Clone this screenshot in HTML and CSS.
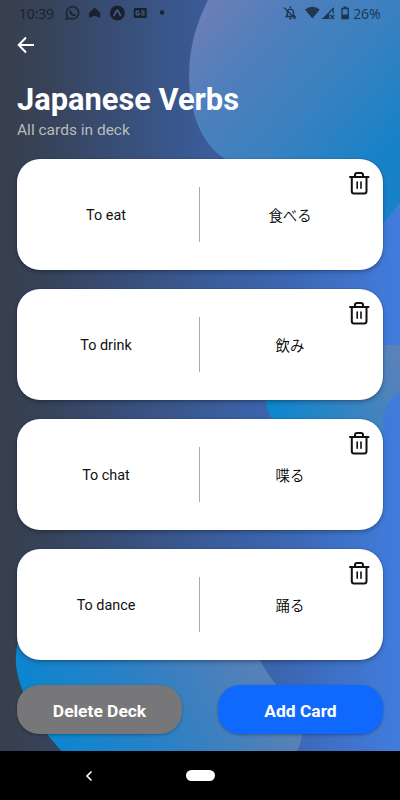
FILE: index.html
```html
<!DOCTYPE html>
<html lang="en">
<head>
<meta charset="utf-8">
<title>Japanese Verbs</title>
<link rel="stylesheet" href="styles.css">
</head>
<body>
<svg width="0" height="0" class="defs">
  <symbol id="trash" viewBox="0 0 22 24">
    <g fill="none" stroke="#111" stroke-width="2" stroke-linecap="round" stroke-linejoin="round">
      <path d="M2 6H20.500M7 5.500V4Q7 2 9 2H13Q15 2 15 4V5.500M3.800 6.500V20Q3.800 22.500 6 22.500H16.300Q18.500 22.500 18.500 20V6.500"/>
      <path stroke-width="1.6" d="M9.200 11V17.300M13 11V17.300"/>
    </g>
  </symbol>
</svg>
<div class="screen">
  <svg class="backdrop" viewBox="0 0 400 751" width="400" height="751">
    <defs>
      <linearGradient id="g1" gradientUnits="userSpaceOnUse" x1="195" y1="10" x2="370" y2="165">
        <stop offset="0" stop-color="#6f7eb6"/><stop offset=".3" stop-color="#4f7fbb"/><stop offset=".65" stop-color="#3981c0"/><stop offset="1" stop-color="#1882c7"/>
      </linearGradient>
      <linearGradient id="g2" gradientUnits="userSpaceOnUse" x1="270" y1="420" x2="400" y2="360">
        <stop offset="0" stop-color="#0b86cd"/><stop offset="1" stop-color="#5a82b9"/>
      </linearGradient>
      <linearGradient id="g3" gradientUnits="userSpaceOnUse" x1="50" y1="740" x2="235" y2="640">
        <stop offset="0" stop-color="#0a86d0"/><stop offset=".5" stop-color="#2d80c4"/><stop offset="1" stop-color="#5580b8"/>
      </linearGradient>
    </defs>
    <path fill="url(#g1)" d="M208 0C196 24 189 48 189 77C190 110 199 142 225 159C270 185 310 260 350 250Q371 239 384 222L400 203V0Z"/>
    <path fill="url(#g2)" d="M400 345H380C320 345 255 360 265 396Q270 440 320 450H383V419Q385 400 400 392Z"/>
    <path fill="url(#g3)" d="M62 751C38 727 19 692 16 665Q13 620 60 590H190C235 600 248 635 260 660Q267 674 278 687C296 704 310 727 297 751Z"/>
  </svg>
  <header class="status">
    <span class="time">10:39</span>
    <svg class="left-icons" width="112" height="16" viewBox="0 0 112 16">
      <g fill="none" stroke="#19212d" stroke-width="1.4">
        <path d="M2.200 14.200L3.200 10.900A6.200 6.200 0 1 1 5.500 13.200Z"/>
        <path stroke-width="1.900" d="M6.200 5.300Q6 8.200 8.100 9.500T11.300 10"/>
      </g>
      <path fill="#19212d" d="M25 12.800V8L29.600 3.500Q30.800 2.500 32 3.500L36.500 8V12.800L30.800 10.800Z"/>
      <circle cx="53.500" cy="8" r="7.500" fill="#19212d"/>
      <path d="M50 11L53 5.500H54L57 11" fill="none" stroke="#41598a" stroke-width="1.800"/>
      <rect x="70" y="3" width="13" height="10" rx="1" fill="#19212d"/>
      <path d="M75.500 6H72.500V10H75.500V8H74M77.500 6H81M77.500 8H81M77.500 10H81" stroke="#506a93" stroke-width="1" fill="none"/>
      <circle cx="98.500" cy="7.500" r="2.200" fill="#19212d"/>
    </svg>
    <svg class="right-icons" width="68" height="16" viewBox="0 0 68 16">
      <g fill="none" stroke="#203650" stroke-width="1.400">
        <path d="M3 11.500H12L10.500 10V6.500A3.200 3.200 0 0 0 4.300 6.500V10ZM7.400 3V1.500M6.200 13.500H8.600M1 2.500L12.500 14"/>
        <path d="M59.200 3.500H65.500V13.500H59.200ZM60.700 2.200H64"/>
      </g>
      <path fill="#203650" d="M22 4.500Q29.500-1 37 4.500L29.500 13.500ZM39 14L51 2V8.500H49.800V5L46.500 8.500V14ZM59 9.500H66V14H59Z"/>
      <path d="M47.500 10L51.300 14M51.300 10L47.500 14" stroke="#203650" stroke-width="1.200"/>
    </svg>
    <span class="battery">26%</span>
  </header>
  <main class="content">
    <svg class="back" width="18" height="18" viewBox="0 0 18 18"><path d="M17 9H2M9 1.500L1.700 9L9 16.500" fill="none" stroke="#fff" stroke-width="2"/></svg>
    <h1>Japanese Verbs</h1>
    <p class="subtitle">All cards in deck</p>
    <section class="cards">
      <article class="card"><span class="word">To eat</span><i class="rule"></i><span class="word" lang="ja">食べる</span><svg class="trash"><use href="#trash"/></svg></article>
      <article class="card"><span class="word">To drink</span><i class="rule"></i><span class="word" lang="ja">飲み</span><svg class="trash"><use href="#trash"/></svg></article>
      <article class="card"><span class="word">To chat</span><i class="rule"></i><span class="word" lang="ja">喋る</span><svg class="trash"><use href="#trash"/></svg></article>
      <article class="card"><span class="word">To dance</span><i class="rule"></i><span class="word" lang="ja">踊る</span><svg class="trash"><use href="#trash"/></svg></article>
    </section>
    <div class="actions"><button class="delete">Delete Deck</button><button class="add">Add Card</button></div>
  </main>
  <nav class="navbar">
    <svg width="8" height="12" viewBox="0 0 8 12"><path d="M6.500 1.500L2 6L6.500 10.500" fill="none" stroke="#fff" stroke-width="1.600"/></svg>
    <span class="pill"></span>
  </nav>
</div>
</body>
</html>
```
FILE: styles.css
```css
* { box-sizing: border-box; }
body { margin: 0; font-family: Roboto, "Noto Sans CJK JP", sans-serif; }
.defs { position: absolute; }
.screen {
  position: relative;
  width: 400px;
  height: 800px;
  overflow: hidden;
  display: flex;
  flex-direction: column;
  background: linear-gradient(90deg, #373f4b 0, #37435a 50px, #384b70 100px, #3a5b96 200px, #3c67b4 290px, #417ddd 400px);
}
.backdrop { position: absolute; top: 0; left: 0; }
.status {
  position: relative;
  height: 26px;
  display: flex;
  align-items: center;
  padding: 0 17px 0 19px;
  font: 14px "Open Sans", sans-serif;
}
.time { width: 45px; color: #19212d; white-space: nowrap; letter-spacing: -.15px; }
.right-icons { margin-left: 108px; }
.battery { width: 30px; margin-left: 2px; color: #203650; font-size: 14px; letter-spacing: -.1px; }
.content { position: relative; height: 725px; padding: 10px 17px 0; display: flex; flex-direction: column; }
.back { display: block; }
h1 { margin: 27px 0 0; font-size: 30.8px; line-height: 38px; font-weight: 700; color: #fff; white-space: nowrap; }
.subtitle { margin: 1px 0 0; font-size: 15.5px; line-height: 20px; color: #bbb; }
.cards { margin-top: 19px; display: flex; flex-direction: column; gap: 19px; }
.card {
  position: relative;
  height: 111px;
  display: grid;
  grid-template-columns: 182px 1px 180px;
  align-items: center;
  background: #fff;
  border-radius: 23px;
  box-shadow: 0 2px 4px rgba(0, 0, 0, .28), 0 0 1px #003080;
}
.word { padding: 2px 4px 0 0; text-align: center; font-size: 14.4px; line-height: 22px; color: #111; }
.word[lang=ja] { padding: 1px 0 0; font-family: "Noto Sans CJK JP", sans-serif; font-weight: 350; color: #000; }
.rule { height: 55px; background: #aaa; }
.trash { position: absolute; top: 12px; right: 13px; width: 22px; height: 24px; }
.actions { margin-top: 25px; display: flex; justify-content: space-between; }
button {
  width: 165px;
  height: 49px;
  border: 0;
  border-radius: 22px;
  padding: 2px 0 0;
  font: 700 17.4px Roboto, sans-serif;
  color: #fff;
  box-shadow: 0 1px 3px rgba(0, 0, 0, .3);
}
.delete { background: #777779; }
.add { background: #1069ff; }
.navbar { position: relative; height: 49px; display: flex; align-items: center; padding-left: 85px; background: #000; }
.pill { width: 29px; height: 11px; margin-left: 93px; border-radius: 6px; background: #fff; }
```
